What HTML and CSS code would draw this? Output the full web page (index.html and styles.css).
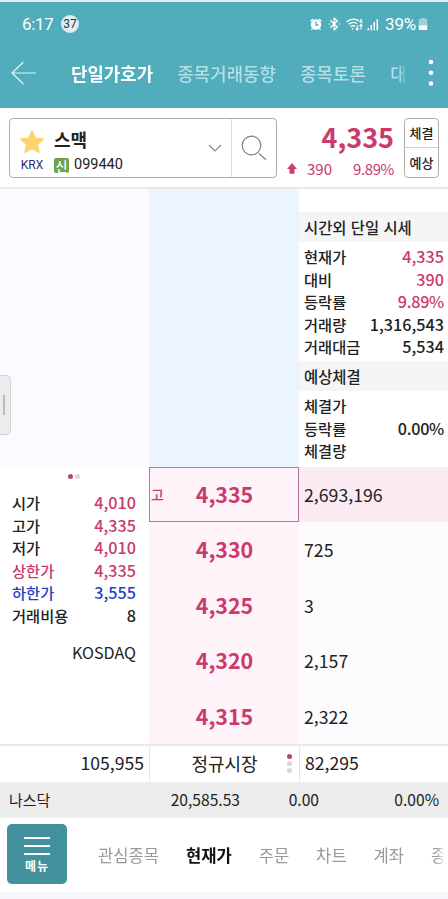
FILE: index.html
```html
<!DOCTYPE html>
<html lang="ko">
<head>
<meta charset="utf-8">
<title>단일가호가</title>
<link rel="stylesheet" href="styles.css">
</head>
<body>
<header class="top">
  <div class="status">
    <span class="clock">6:17</span><span class="count">37</span>
    <svg class="status-icons" width="70" height="16" viewBox="0 0 70 16">
      <g fill="none" stroke="#fff" stroke-width="1.3">
        <circle cx="7" cy="8.5" r="4.6" fill="#fff"/>
        <path d="M1.5 5.2 4.2 3M12.5 5.2 9.8 3M3.5 12.5 2.5 14M10.5 12.5l1 1.500"/>
        <path d="M7 5.500V9H9.500" stroke="#51acbc"/>
        <path d="M21.800 4.800 28.300 11 25.200 13.700V2.300L28.300 5 21.800 11.200M20.300 8h.1M30.300 8h.1" stroke-linecap="round"/>
        <path d="M37.500 5.800Q43.500 .9 50 4.800M39.500 8.300Q43.500 5 48 7.500M41.500 10.600Q43.500 9 46 10.300" />
        <path d="M48.300 9v5M46.800 12.500l1.500 1.500 1.500-1.500M52 13.500v-5M50.500 10 52 8.500l1.500 1.500" stroke-width="1.100"/>
        <path d="M53 3.200Q51.200 3 51.200 5.500M51 5.800a1.200 1.200 0 1 0 2.400 0a1.200 1.200 0 1 0-2.400 0" stroke-width="1"/>
      </g>
      <path fill="#fff" d="M42.500 12.200h2l-1 1.800zM58.500 12h1.500v2.300h-1.500zM61.500 9h1.500v5.300h-1.500zM64.500 6h1.500v8.300h-1.500zM67.500 3.300h1.500v11h-1.500z"/>
    </svg>
    <span class="percent">39%</span>
    <svg width="10" height="14" viewBox="0 0 10 14"><path fill="#fff" opacity=".45" d="M3 1h4v1h1.500q.8 0 .8.8V9H.7V2.800Q.7 2 1.500 2H3z"/><path fill="#fff" d="M.7 8.500h8.600v3.700q0 .8-.8.8h-7q-.8 0-.8-.8z"/></svg>
  </div>
  <nav class="tabs">
    <svg class="back" width="26" height="24" viewBox="0 0 26 24"><path fill="none" stroke="#e4f4f6" stroke-width="1.200" d="M12.500 1 1 12l11.500 11M1 12h24"/></svg>
    <div class="tab-strip">
      <span class="on">단일가호가</span><span>종목거래동향</span><span>종목토론</span><span>대</span>
    </div>
    <svg class="more" width="6" height="28" viewBox="0 0 6 28"><g fill="#fff"><circle cx="3" cy="3" r="2.300"/><circle cx="3" cy="13.700" r="2.300"/><circle cx="3" cy="24.500" r="2.300"/></g></svg>
  </nav>
</header>

<section class="stock">
  <div class="picker">
    <div class="market">
      <svg width="26" height="25" viewBox="0 0 26 25"><path fill="#fbd56b" stroke="#fbd56b" stroke-linejoin="round" d="m13 1.500 3.500 7.500 8.200 1-6 5.600 1.500 8L13 19.700l-7.200 3.900 1.500-8-6-5.600 8.200-1z"/></svg>
      <span class="krx">KRX</span>
    </div>
    <div class="ident">
      <div class="name">스맥</div>
      <div class="code"><span class="badge">신</span><span>099440</span></div>
    </div>
    <svg class="chev" width="14" height="8" viewBox="0 0 14 8"><path fill="none" stroke="#888" stroke-width="1.100" d="m1 1 6 6 6-6"/></svg>
    <div class="search"><svg width="26" height="26" viewBox="0 0 26 26"><g fill="none" stroke="#808080" stroke-width="1.200"><circle cx="10.500" cy="10.500" r="9.300"/><path d="m18 18.500 7 6.300"/></g></svg></div>
  </div>
  <div class="quote">
    <div class="price">4,335</div>
    <div class="change"><svg width="10" height="11" viewBox="0 0 10 11"><path fill="#d03a6c" d="m5 0 5 6H7.500v4.700h-5V6H0z"/></svg><span class="diff">390</span><span class="rate">9.89%</span></div>
  </div>
  <div class="toggle"><span>체결</span><span>예상</span></div>
</section>

<main class="book">
  <div class="left">
    <div class="ask-area"><div class="handle"></div></div>
    <div class="page-dots"><i class="on"></i><i></i></div>
    <dl class="facts">
      <div><dt>시가</dt><dd class="up">4,010</dd></div>
      <div><dt>고가</dt><dd class="up">4,335</dd></div>
      <div><dt>저가</dt><dd class="up">4,010</dd></div>
      <div class="up"><dt>상한가</dt><dd>4,335</dd></div>
      <div class="down"><dt>하한가</dt><dd>3,555</dd></div>
      <div><dt>거래비용</dt><dd>8</dd></div>
    </dl>
    <div class="exchange">KOSDAQ</div>
  </div>
  <div class="ladder">
    <div class="ask"></div><div class="ask"></div><div class="ask"></div><div class="ask"></div><div class="ask"></div>
    <div class="bid current"><span class="high">고</span>4,335</div>
    <div class="bid">4,330</div><div class="bid">4,325</div><div class="bid">4,320</div><div class="bid">4,315</div>
  </div>
  <div class="right">
    <div class="summary">
      <h2>시간외 단일 시세</h2>
      <dl class="facts">
        <div><dt>현재가</dt><dd class="up">4,335</dd></div>
        <div><dt>대비</dt><dd class="up">390</dd></div>
        <div><dt>등락률</dt><dd class="up pct">9.89%</dd></div>
        <div><dt>거래량</dt><dd>1,316,543</dd></div>
        <div><dt>거래대금</dt><dd>5,534</dd></div>
      </dl>
      <h2>예상체결</h2>
      <dl class="facts">
        <div><dt>체결가</dt><dd></dd></div>
        <div><dt>등락률</dt><dd class="pct">0.00%</dd></div>
        <div><dt>체결량</dt><dd></dd></div>
      </dl>
    </div>
    <div class="qty best">2,693,196</div><div class="qty">725</div><div class="qty">3</div><div class="qty">2,157</div><div class="qty">2,322</div>
  </div>
</main>

<section class="totals">
  <div class="sum-ask">105,955</div>
  <div class="session">정규시장<span class="steps"><i class="on"></i><i></i><i></i></span></div>
  <div class="sum-bid">82,295</div>
</section>
<section class="ticker"><span class="index">나스닥</span><span>20,585.53</span><span>0.00</span><span>0.00%</span></section>
<footer class="bottom">
  <div class="menu"><svg width="26" height="20" viewBox="0 0 26 20"><path stroke="#fff" stroke-width="2" d="M0 2h26M0 10h26M0 18h26"/></svg><span>메뉴</span></div>
  <nav class="links"><span>관심종목</span><span class="on">현재가</span><span>주문</span><span>차트</span><span>계좌</span><span>종</span></nav>
</footer>
</body>
</html>
```
FILE: styles.css
```css
* { box-sizing: border-box; }
body { margin: 0; width: 448px; height: 899px; overflow: hidden; background: #f5f6f9; color: #222; font-family: "Noto Sans CJK KR", sans-serif; }
svg { display: block; flex: none; }
dl, dd, h2 { margin: 0; }
.up { color: #cb3a6b; }
.down { color: #2442c8; }

.top { height: 108px; border-top: 2px solid #e0f0f3; background: #51acbc; color: #fff; }
.status { display: flex; align-items: center; height: 44px; padding: 0 20px 0 22px; font-family: Roboto, sans-serif; }
.clock { font-size: 17px; width: 39px; letter-spacing: -.3px; }
.count { width: 18px; height: 18px; border-radius: 50%; background: #dceff3; color: #333; font-size: 12px; line-height: 18px; text-align: center; }
.status-icons { margin-left: auto; }
.percent { font-size: 17px; margin: 0 2px 0 6px; letter-spacing: -.2px; }
.tabs { display: flex; align-items: center; height: 54px; padding: 0 14px 0 11px; }
.tab-strip { display: flex; gap: 24.3px; width: 334px; margin-left: 34px; overflow: hidden; white-space: nowrap; font-size: 17.85px; color: #b4dfe6; font-weight: 500; -webkit-mask-image: linear-gradient(90deg, #000 328px, transparent 336px); mask-image: linear-gradient(90deg, #000 328px, transparent 336px); }
.tab-strip .on { color: #fff; font-weight: 700; }
.more { margin-left: auto; }

.stock { display: flex; height: 81px; padding: 10px 9px 0; background: #fff; border-bottom: 2px solid #e9e9e9; }
.picker { display: flex; width: 268px; height: 60px; border: 1px solid #b0b0b0; border-radius: 4px; }
.market { display: flex; flex-direction: column; align-items: center; width: 44px; padding-top: 10px; }
.krx { font: 12px/16px Roboto, sans-serif; color: #2b2e74; margin-top: 3px; }
.name { font: 700 18px/26px "Noto Sans CJK KR", sans-serif; margin-top: 7px; }
.code { display: flex; align-items: center; gap: 5px; height: 18px; margin-top: 4px; font: 14.5px/18px Roboto, sans-serif; }
.badge { width: 15px; height: 15px; border-radius: 2px; background: #6da253; color: #fff; font: 500 13px/15px "Noto Sans CJK KR", sans-serif; text-align: center; }
.chev { margin: 25px 9px 0 auto; }
.search { display: flex; align-items: center; justify-content: center; width: 45px; border-left: 1px solid #dcdcdc; }
.quote { width: 117px; color: #cb3a6b; text-align: right; }
.price { font-size: 27px; line-height: 37px; font-weight: 700; }
.change { display: flex; align-items: center; justify-content: flex-end; height: 26px; font-size: 15px; }
.diff { margin: 0 21px 0 10px; }
.rate { letter-spacing: -.4px; }
.toggle { display: flex; flex-direction: column; width: 35px; height: 60px; margin-left: 10px; border: 1px solid #b0b0b0; border-radius: 4px; text-align: center; font: 500 13px/28px "Noto Sans CJK KR", sans-serif; }
.toggle span + span { border-top: 1px solid #cfcfcf; line-height: 30px; }
.toggle span:first-child { height: 29px; }

.book { display: grid; grid-template-columns: 149px 150px 149px; height: 555px; background: #fff; }
.ask-area { display: flex; height: 278px; padding-top: 186px; background: #f9fbff; }
.handle { display: flex; align-items: center; width: 11px; height: 60px; background: #ececed; border: 1px solid #d0d2d4; border-left: 0; border-radius: 0 5px 5px 0; }
.handle::after { content: ""; width: 2px; height: 20px; margin-left: 3px; background: #bbb; }
.page-dots { display: flex; justify-content: center; gap: 2px; height: 25px; padding: 7px 1px 0 0; }
i { width: 5px; height: 5px; border-radius: 50%; background: #d9d9d9; }
i.on { background: #b24672; }
.facts > div { display: flex; justify-content: space-between; height: 22.5px; font-size: 16.2px; line-height: 22.5px; font-weight: 500; }
.facts dt { font-size: 15.3px; margin-top: -1px; }
.facts dd { margin-top: -1px; }
.facts .pct { letter-spacing: -.3px; }
.left .facts { padding: 0 13px 0 12px; }
.exchange { padding: 10px 13px 0 0; text-align: right; font-size: 16.1px; line-height: 30px; }
.ladder { display: grid; grid-template-rows: 55px 56px 55px 56px 56px 55px 56px 55px 56px 55px; }
.ask { background: #ecf4ff; border-bottom: 1px solid #f1f7ff; }
.bid { display: flex; align-items: center; justify-content: center; position: relative; padding: 0 0 2px 1px; background: #fdf3f8; border-bottom: 1px solid #fff8fb; color: #cb3a6b; font-size: 21.4px; font-weight: 700; }
.current { border: 1px solid #b97596; }
.high { position: absolute; left: 1px; font-size: 14px; font-weight: 500; }
.right { display: grid; grid-template-rows: 278px 55px 56px 55px 56px 55px; }
.summary { padding-top: 23px; }
.summary h2 { height: 30px; padding-left: 5px; background: #f5f5f5; font: 500 15.4px/30px "Noto Sans CJK KR", sans-serif; }
.summary .facts { padding: 4px 4px 0 5px; height: 119px; }
.qty { display: flex; align-items: center; padding: 0 0 2px 5px; background: #fdfbfd; font-size: 17.7px; }
.best { background: #faebf3; }

.totals { display: grid; grid-template-columns: 149px 150px 149px; height: 38px; border-top: 2px solid #e9e9e9; background: #fff; font-size: 17.6px; line-height: 34px; }
.totals > div + div { border-left: 1px solid #e5e5e5; }
.sum-ask { padding-right: 5px; text-align: right; }
.session { position: relative; text-align: center; font-size: 18px; }
.steps { position: absolute; right: 7px; top: 8px; display: flex; flex-direction: column; gap: 2px; }
.sum-bid { padding-left: 5px; }
.ticker { display: grid; grid-template-columns: 80px 160px 79px 120px; height: 36px; background: #ececec; font-size: 15.6px; line-height: 35px; text-align: right; }
.index { padding-left: 9px; text-align: left; font-size: 15px; }
.bottom { display: flex; height: 74px; padding: 6px 0 0 7px; background: #fff; }
.menu { display: flex; flex-direction: column; align-items: center; width: 60px; height: 60px; padding-top: 12px; border-radius: 5px; background: #43919f; color: #fff; font: 700 12px/20px "Noto Sans CJK KR", sans-serif; letter-spacing: 1px; }
.links { display: flex; gap: 26.9px; width: 345px; margin-left: 31px; overflow: hidden; white-space: nowrap; font: 16.6px/62px "Noto Sans CJK KR", sans-serif; color: #999; -webkit-mask-image: linear-gradient(90deg, #000 338px, transparent 348px); mask-image: linear-gradient(90deg, #000 338px, transparent 348px); }
.links .on { color: #111; font-weight: 700; }
```
